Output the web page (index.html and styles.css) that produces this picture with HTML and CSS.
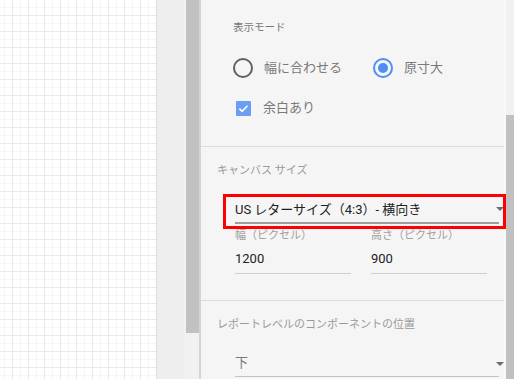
FILE: index.html
```html
<!DOCTYPE html>
<html lang="ja">
<head>
<meta charset="utf-8">
<link rel="stylesheet" href="styles.css">
</head>
<body>
<div class="app">
  <div class="canvas"></div>
  <div class="gutter"></div>
  <div class="vscroll left"><div class="thumb"></div></div>
  <div class="edge"></div>
  <div class="panel">
    <section class="sec sec1">
      <div class="sublabel">表示モード</div>
      <div class="radios">
        <div class="opt first"><span class="radio"></span><span class="optlabel">幅に合わせる</span></div>
        <div class="opt"><span class="radio on"></span><span class="optlabel">原寸大</span></div>
      </div>
      <div class="check">
        <span class="cbslot"><span class="cb"><svg viewBox="0 0 15 15" width="15" height="15"><path d="M3.4 7.6l2.7 2.7 5.4-5.6" fill="none" stroke="#fff" stroke-width="1.6"/></svg></span></span>
        <span class="optlabel">余白あり</span>
      </div>
    </section>
    <section class="sec sec2">
      <div class="head">キャンバス サイズ</div>
      <div class="select main">
        <span class="val">US レターサイズ（4:3）- 横向き</span>
        <span class="arrow"></span>
        <span class="highlight"></span>
      </div>
      <div class="dims">
        <div class="dim">
          <div class="dimlabel">幅（ピクセル）</div>
          <div class="dimval">1200</div>
        </div>
        <div class="dim">
          <div class="dimlabel">高さ（ピクセル）</div>
          <div class="dimval">900</div>
        </div>
      </div>
    </section>
    <section class="sec sec3">
      <div class="head">レポートレベルのコンポーネントの位置</div>
      <div class="select pos">
        <span class="val">下</span>
        <span class="arrow"></span>
      </div>
    </section>
  </div>
  <div class="strip"></div>
  <div class="vscroll right"><div class="thumb"></div></div>
</div>
</body>
</html>
```

FILE: styles.css
```css
html, body {
  margin: 0;
  padding: 0;
  width: 514px;
  height: 379px;
  overflow: hidden;
  background: #f5f5f5;
  font-family: Roboto, "Noto Sans CJK JP", "Noto Sans", sans-serif;
}

.app {
  display: flex;
  width: 514px;
  height: 379px;
}

.canvas {
  width: 156px;
  flex: none;
  background-color: #ffffff;
  background-image:
    linear-gradient(to right, #e9e9e9 1px, transparent 1px),
    linear-gradient(to bottom, #e9e9e9 1px, transparent 1px),
    linear-gradient(to right, #f5f5f5 1px, transparent 1px),
    linear-gradient(to bottom, #f5f5f5 1px, transparent 1px);
  background-size: 16px 16px, 16px 16px, 8px 8px, 8px 8px;
  background-position: 12px 0, 0 15px, 4px 0, 0 7px;
  border-right: 1px solid #dedede;
}

.gutter {
  width: 27px;
  flex: none;
  background: #eeeeee;
}

.vscroll {
  flex: none;
  background: #f1f1f1;
  display: flex;
  flex-direction: column;
}

.vscroll.left {
  width: 15px;
  align-items: flex-end;
}

.vscroll.left .thumb {
  width: 13px;
  height: 333px;
  background: #c1c1c1;
}

.edge {
  width: 2px;
  flex: none;
  background: #d4d4d4;
}

.panel {
  width: 303px;
  flex: none;
  background: #f5f5f5;
  color: #757575;
}

.strip {
  width: 2px;
  flex: none;
  background: #f9f9f9;
}

.vscroll.right {
  width: 9px;
}

.vscroll.right .thumb {
  margin-top: 115px;
  flex: 1;
  background: #c1c1c1;
}

.sec {
  box-sizing: border-box;
  border-bottom: 1px solid #dcdcdc;
}

.sec1 {
  height: 147px;
  padding: 20px 0 0 32px;
}

.sublabel {
  font-size: 10.5px;
  line-height: 16px;
  color: #777777;
}

.radios {
  display: flex;
  margin-top: 22px;
  height: 20px;
}

.opt {
  display: flex;
  align-items: center;
}

.opt.first {
  width: 140px;
}

.radio {
  box-sizing: border-box;
  width: 20px;
  height: 20px;
  border-radius: 50%;
  border: 2px solid #616161;
  margin-right: 11px;
  display: flex;
  align-items: center;
  justify-content: center;
}

.radio.on {
  border-color: #4f8ef5;
}

.radio.on::after {
  content: "";
  width: 10px;
  height: 10px;
  border-radius: 50%;
  background: #4f8ef5;
}

.optlabel {
  font-size: 13px;
  line-height: 20px;
  color: #7a7a7a;
}

.check {
  display: flex;
  align-items: center;
  margin-top: 20px;
  height: 20px;
}

.cbslot {
  width: 20px;
  height: 20px;
  margin-right: 10px;
  display: flex;
  align-items: center;
  justify-content: center;
}

.cb {
  width: 15px;
  height: 15px;
  background: #6a9ef3;
  border-radius: 1px;
  display: block;
}

.cb svg {
  display: block;
}

.sec2 {
  height: 154px;
  padding-top: 16px;
}

.head {
  padding-left: 16px;
  font-size: 11px;
  line-height: 16px;
  color: #9a9a9a;
}

.select {
  position: relative;
  margin-left: 34px;
  width: 264px;
}

.select.main {
  margin-top: 21px;
  padding-bottom: 2px;
  border-bottom: 2px solid #9e9e9e;
}

.select .val {
  display: block;
  font-size: 13px;
  line-height: 20px;
  color: #212121;
}

.arrow {
  position: absolute;
  right: -5px;
  top: 7px;
  width: 0;
  height: 0;
  border-left: 4px solid transparent;
  border-right: 4px solid transparent;
  border-top: 4px solid #6d6d6d;
}

.highlight {
  position: absolute;
  left: -12px;
  right: -7px;
  top: -6px;
  bottom: -7px;
  border: 3px solid #ff0000;
  pointer-events: none;
}

.dims {
  display: flex;
  gap: 20px;
  margin-left: 34px;
}

.dim {
  width: 116px;
}

.dimlabel {
  margin-top: 5px;
  font-size: 11px;
  line-height: 14px;
  color: #a0a0a0;
}

.dimval {
  margin-top: 7px;
  font-size: 13px;
  line-height: 18px;
  color: #212121;
  padding-bottom: 5px;
  border-bottom: 1px solid #cfcfcf;
}

.sec3 {
  border-bottom: none;
  padding-top: 16px;
}

.select.pos {
  margin-top: 20px;
  padding-bottom: 3px;
  border-bottom: 1px solid #c4c4c4;
}

.select.pos .val {
  color: #7a7a7a;
}

.select.pos .arrow {
  top: 9px;
}
```
